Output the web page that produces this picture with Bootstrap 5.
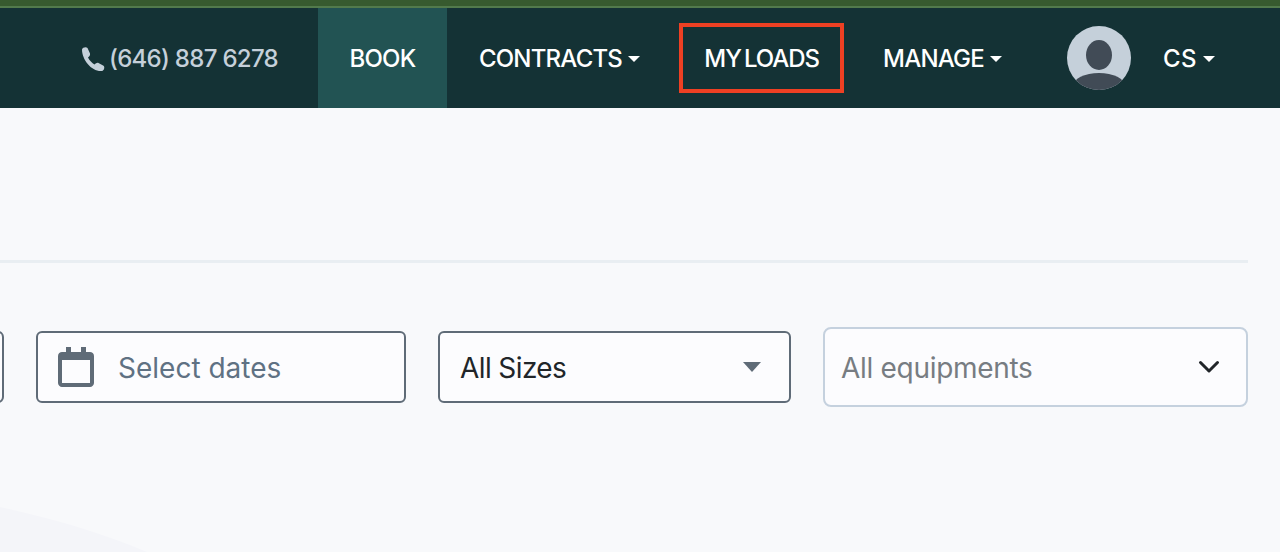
<!DOCTYPE html>
<html lang="en">
<head>
  <meta charset="UTF-8">
  <title>My Loads</title>
  <link href="https://cdn.jsdelivr.net/npm/bootstrap@5.3.0/dist/css/bootstrap.min.css" rel="stylesheet">
  <style>
    html, body { height: 100%; }
    body { background: #f8f9fb; font-family: Inter, "Noto Sans", sans-serif; overflow: hidden; position: relative; }
    .top-strip { height: 8px; background: #375a2f; border-bottom: 2px solid #527a4c; }
    .main-bar { height: 100px; background: #143235; padding: 0 65px 0 0; }
    .main-bar .navbar-nav .nav-link { color: #fff; font-size: 24px; font-weight: 500; letter-spacing: -0.8px; line-height: 98px; padding: 2px 0 0; }
    .main-bar .navbar-nav .initials-link { letter-spacing: 0.5px; }
    .main-bar .dropdown-toggle::after { margin-left: 6px; vertical-align: 5px; border-top-width: 6px; border-left-width: 6.5px; border-right-width: 6.5px; }
    .phone-link { color: #c5d0da; font-size: 24px; font-weight: 500; letter-spacing: -0.7px; margin-right: 40px; padding-top: 2px; }
    .book-item { background: #225353; width: 129px; text-align: center; margin-right: 32px; }
    .loads-box { border: 4px solid #ee4023; width: 165px; height: 70px; margin: 0 39px 0 39px; }
    .main-bar .navbar-nav .loads-box .nav-link { line-height: 60px; text-align: center; letter-spacing: -1.1px; word-spacing: -2px; }
    .avatar-pic { width: 64px; height: 64px; margin: 0 32px 0 65px; }
    .rule-line { height: 3px; background: #e9eef2; margin: 152px 32px 0 0; }
    .filter-row { margin: 68px 32px 0 0; gap: 32px; }
    .filter-box { height: 72px; background: #fcfcfe; border: 2px solid #5f6b77; border-radius: 6px; font-size: 28px; font-weight: 400; }
    .box-label { padding-top: 2px; }
    .clipped-box { width: 200px; margin-left: -200px; flex: none; }
    .date-box { width: 370px; color: #5f7183; padding-left: 20px; gap: 24px; }
    .size-box { width: 353px; color: #212529; padding: 0 28px 0 20px; letter-spacing: -0.6px; }
    .size-box .caret-down { border-top: 10px solid #5f6b77; border-left: 9px solid transparent; border-right: 9px solid transparent; }
    .equip-box { width: 425px; height: 80px; margin-top: -4px; border-color: #c5d1de; color: #777c82; padding: 0 26px 0 16px; border-radius: 8px; letter-spacing: -0.3px; }
    .corner-shape { position: absolute; left: 0; bottom: 0; width: 150px; height: 50px; }
  </style>
</head>
<body>
  <div class="top-strip"></div>
  <nav class="navbar navbar-expand main-bar justify-content-end align-items-center">
    <span class="phone-link d-flex align-items-center gap-1">
      <svg width="24" height="26" viewBox="0 0 24 26"><path fill="#c5d0da" d="M1 3.500 C1.500 1.500 5 0.500 6.500 2 L9 7.500 C9.500 9.500 8 10.500 7 11.500 C8.500 14.500 11 17 13.500 18.500 C15 17.500 16 16.300 17.500 17 L22.500 19.800 C24 21 23.300 24.500 21 25 C11 26 1 14 1 3.500 Z"/></svg>
      <span>(646) 887 6278</span>
    </span>
    <ul class="navbar-nav align-items-center">
      <li class="nav-item book-item"><a class="nav-link" href="#">BOOK</a></li>
      <li class="nav-item"><a class="nav-link dropdown-toggle" href="#">CONTRACTS</a></li>
      <li class="nav-item loads-box"><a class="nav-link" href="#">MY LOADS</a></li>
      <li class="nav-item"><a class="nav-link dropdown-toggle" href="#">MANAGE</a></li>
      <li class="nav-item">
        <svg class="avatar-pic d-block" viewBox="0 0 64 64">
          <defs><clipPath id="avatarClip"><circle cx="32" cy="32" r="32"/></clipPath></defs>
          <circle cx="32" cy="32" r="32" fill="#c5d0da"/>
          <ellipse cx="32" cy="29" rx="13" ry="15" fill="#414b56"/>
          <ellipse cx="32" cy="60" rx="26" ry="13" fill="#414b56" clip-path="url(#avatarClip)"/>
        </svg>
      </li>
      <li class="nav-item"><a class="nav-link initials-link dropdown-toggle" href="#">CS</a></li>
    </ul>
  </nav>
  <div class="rule-line"></div>
  <div class="filter-row d-flex justify-content-end align-items-start">
    <div class="filter-box clipped-box"></div>
    <div class="filter-box date-box d-flex align-items-center">
      <svg width="36" height="40" viewBox="0 0 36 40"><path fill="#5f6b77" fill-rule="evenodd" d="M8 0h5v5h10V0h5v5h4c2 0 4 1.500 4 4v27c0 2-2 4-4 4H4c-2 0-4-2-4-4V9c0-2.500 2-4 4-4h4zM4 13v23h28V13z"/></svg>
      <span class="box-label">Select dates</span>
    </div>
    <div class="filter-box size-box d-flex align-items-center justify-content-between">
      <span class="box-label">All Sizes</span>
      <span class="caret-down"></span>
    </div>
    <div class="filter-box equip-box d-flex align-items-center justify-content-between">
      <span class="box-label">All equipments</span>
      <svg width="22" height="14" viewBox="0 0 22 14"><path fill="none" stroke="#212529" stroke-width="3" stroke-linecap="round" stroke-linejoin="round" d="M2.500 2.500 11 11 19.500 2.500"/></svg>
    </div>
  </div>
  <svg class="corner-shape" viewBox="0 0 150 50"><path fill="#f4f5f9" d="M0 5 C50 16 100 30 147 50 H0 Z"/></svg>
</body>
</html>
